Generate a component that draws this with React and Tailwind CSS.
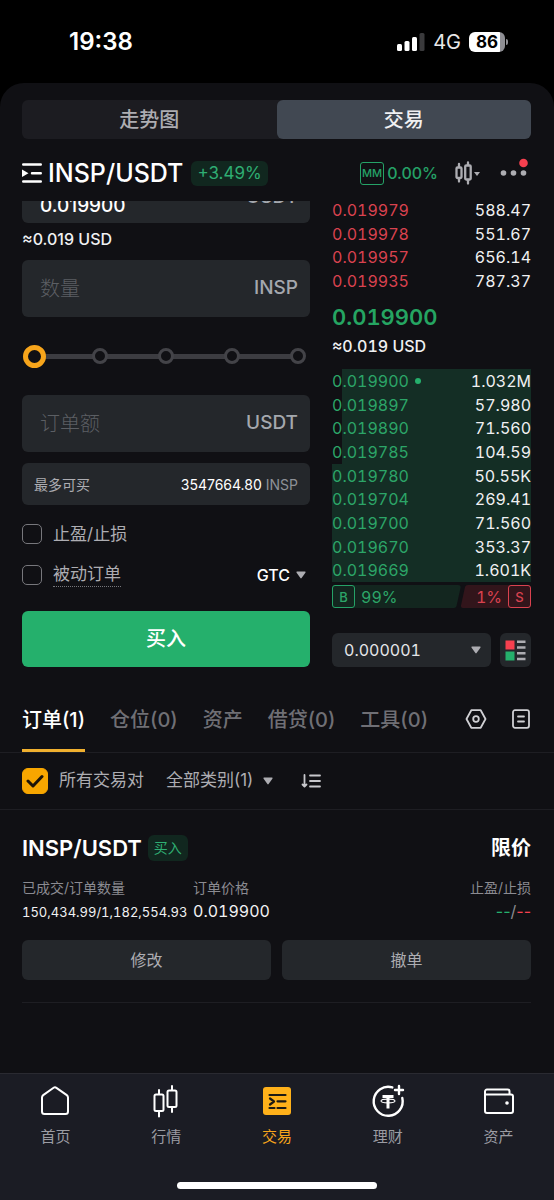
import { useState } from 'react';
import clsx from 'clsx';

const asks = [
    ['0.019979', '588.47'],
    ['0.019978', '551.67'],
    ['0.019957', '656.14'],
    ['0.019935', '787.37'],
];

const bids = [
    { price: '0.019900', size: '1.032M', depth: 95, mine: true },
    { price: '0.019897', size: '57.980', depth: 95 },
    { price: '0.019890', size: '71.560', depth: 95 },
    { price: '0.019785', size: '104.59', depth: 95 },
    { price: '0.019780', size: '50.55K', depth: 100 },
    { price: '0.019704', size: '269.41', depth: 100 },
    { price: '0.019700', size: '71.560', depth: 100 },
    { price: '0.019670', size: '353.37', depth: 100 },
    { price: '0.019669', size: '1.601K', depth: 100 },
];

const Caret = ({ className = 'w-[10px]' }) => (
    <svg viewBox="0 0 10 8" className={clsx('pointer-events-none shrink-0', className)} fill="#adadb2" aria-hidden="true">
        <path d="M1.2.5h7.6c.7 0 1 .7.6 1.2L5.6 7.1a.8.8 0 0 1-1.2 0L.6 1.7C.2 1.2.5.5 1.2.5z" />
    </svg>
);

function StatusBar() {
    return (
        <header className="flex h-[83px] items-center justify-between pr-[46px] pl-[69px]">
            <span className="text-[24px] leading-7 font-semibold text-white">19:38</span>
            <div className="flex items-center gap-2">
                <svg width="28" height="18" viewBox="0 0 28 18" fill="#fff" aria-hidden="true">
                    <rect x="0" y="11" width="5" height="7" rx="1.5" />
                    <rect x="7.5" y="8" width="5" height="10" rx="1.5" />
                    <rect x="15" y="4" width="5" height="14" rx="1.5" />
                    <rect x="22.5" y="0" width="5" height="18" rx="1.5" fill="#3a3a3c" />
                </svg>
                <span className="text-[20px] leading-6 text-[#e8e8e8]">4G</span>
                <div className="flex items-center gap-px">
                    <div className="flex h-5 w-9 items-center justify-center rounded-md bg-linear-to-r from-white from-86% to-[#8e8e93] to-86% text-[17px] leading-5 font-bold text-black">
                        86
                    </div>
                    <div className="h-[6px] w-[2px] rounded-r-full bg-[#8e8e93]" />
                </div>
            </div>
        </header>
    );
}

function PairHeader() {
    return (
        <div className="flex h-[62px] items-center pt-[6px]">
            <button type="button" aria-label="切换交易对" className="mr-[6px]">
                <svg width="20" height="20" viewBox="0 0 20 20" fill="none" stroke="#fff" strokeWidth="2.4" strokeLinecap="round">
                    <path d="M1.2 1.5h17.6M10 10.200h8.800M1.200 18.500h17.600" />
                    <path d="M0 6.500l6.500 3.700-6.500 3.700z" fill="#fff" stroke="none" />
                </svg>
            </button>
            <h1 className="text-[25px] leading-8 font-medium text-white">INSP/USDT</h1>
            <span className="ml-2 rounded-md bg-[#11271f] px-[6px] text-[17px] leading-[25px] text-[#2fae73]">+3.49%</span>
            <div className="ml-auto flex items-center">
                <span className="flex h-[23px] w-6 items-center justify-center rounded-[3px] border border-[#25a267] text-[11px] font-medium text-[#25a267]">
                    MM
                </span>
                <span className="ml-[3px] text-[16px] leading-6 font-medium text-[#25a267]">0.00%</span>
                <button type="button" aria-label="K线" className="ml-[17px]">
                    <svg width="26" height="24" viewBox="0 0 26 24" fill="none" stroke="#adadb2" strokeWidth="2.300" strokeLinecap="round">
                        <rect x="1.500" y="6.500" width="5" height="10.500" rx="1" />
                        <path d="M4 3v3M4 18v2.500" />
                        <rect x="10.200" y="4.500" width="5.500" height="14" rx="1" />
                        <path d="M13 1.500v2.500M13 19v3.500" />
                        <path d="M19 11h6l-3 4z" fill="#adadb2" stroke="none" />
                    </svg>
                </button>
                <button type="button" aria-label="更多" className="ml-[18px]">
                    <svg width="32" height="30" viewBox="0 0 32 30" fill="#adadb2">
                        <circle cx="4.500" cy="15" r="2.800" />
                        <circle cx="14.500" cy="15" r="2.800" />
                        <circle cx="24.500" cy="15" r="2.800" />
                        <circle cx="24.500" cy="5" r="4.300" fill="#f6404f" />
                    </svg>
                </button>
            </div>
        </div>
    );
}

const AmountField = ({ label, unit }) => (
    <label className="flex h-[57px] items-center rounded-md bg-[#24272b] pr-3 pl-[18px]">
        <input
            type="text"
            aria-label={label}
            placeholder={label}
            className="w-full min-w-0 bg-transparent text-[20px] font-light text-white outline-none placeholder:text-[#5c5f64]"
        />
        <span className="text-[19px] font-medium text-[#a4a8ae]">{unit}</span>
    </label>
);

function PercentSlider() {
    const [value, setValue] = useState(0);
    return (
        <div className="relative flex h-6 items-center justify-between">
            <div className="absolute inset-x-3 h-[5px] bg-[#3c3c41]" />
            {[0, 25, 50, 75, 100].map((step) => (
                <span key={step} className="relative flex w-6 justify-center">
                    <span
                        className={clsx(
                            'rounded-full bg-[#101014]',
                            value === step ? 'size-[23px] border-[5px] border-[#f7a51b]' : 'size-4 border-[3px] border-[#434348]'
                        )}
                    />
                </span>
            ))}
            <input
                type="range"
                min="0"
                max="100"
                step="25"
                value={value}
                onChange={(e) => setValue(Number(e.target.value))}
                aria-label="仓位比例"
                className="absolute inset-0 w-full cursor-pointer opacity-0"
            />
        </div>
    );
}

const Option = ({ children }) => (
    <label className="flex items-center gap-[11px] text-[17px] leading-6 text-[#adadb2]">
        <input type="checkbox" className="size-5 appearance-none rounded-[5px] border border-[#77777c] checked:bg-[#f7a600]" />
        {children}
    </label>
);

function OrderForm() {
    return (
        <form className="flex flex-col" onSubmit={(e) => e.preventDefault()}>
            {/* price box, scrolled half under the header */}
            <div className="flex h-[22px] items-end overflow-hidden">
                <label className="flex h-[57px] w-full shrink-0 items-center rounded-md bg-[#24272b] pt-[6px] pr-3 pl-[18px]">
                    <input
                        type="text"
                        aria-label="价格"
                        defaultValue="0.019900"
                        className="w-full min-w-0 bg-transparent pt-[18px] text-[19px] font-medium text-white outline-none"
                    />
                    <span className="text-[19px] font-medium text-[#a4a8ae]">USDT</span>
                </label>
            </div>
            <p className="mt-1 text-[16px] leading-6 font-medium text-[#f0f0f2]">≈0.019 USD</p>
            <div className="mt-[9px]">
                <AmountField label="数量" unit="INSP" />
            </div>
            <div className="my-[27px]">
                <PercentSlider />
            </div>
            <AmountField label="订单额" unit="USDT" />
            <div className="mt-[11px] flex h-[42px] items-center justify-between rounded-md bg-[#24272b] px-3 text-[14px]">
                <span className="text-[#adadb2]">最多可买</span>
                <span className="text-[#8e9197]">
                    <span className="text-white">3547664.80</span> INSP
                </span>
            </div>
            <div className="mt-[17px]">
                <Option>止盈/止损</Option>
            </div>
            <div className="mt-4 flex items-center justify-between">
                <Option>
                    <span className="border-b border-dotted border-[#77777c]">被动订单</span>
                </Option>
                <label className="flex items-center gap-[6px] pr-1">
                    <select aria-label="有效方式" className="field-sizing-content appearance-none text-[16px] leading-6 font-medium text-white outline-none">
                        <option>GTC</option>
                    </select>
                    <Caret />
                </label>
            </div>
            <button type="submit" className="mt-6 h-[56px] rounded-md bg-[#25b06c] text-[20px] font-medium text-white">
                买入
            </button>
        </form>
    );
}

function OrderBook() {
    return (
        <section className="flex flex-col text-[16px] leading-6 tabular-nums">
            <div className="-mt-[3px] grid h-[95px] auto-rows-fr">
                {asks.map(([price, size]) => (
                    <div key={price} className="flex items-center justify-between">
                        <span className="text-[#d9424f]">{price}</span>
                        <span className="text-[#f0f0f2]">{size}</span>
                    </div>
                ))}
            </div>
            <p className="mt-[10px] text-[22px] leading-7 font-semibold text-[#25a562]">0.019900</p>
            <p className="mt-[3px] font-medium text-[#f0f0f2]">≈0.019 USD</p>
            <div className="mt-[11px] grid h-[213px] auto-rows-fr">
                {bids.map((row) => (
                    <div key={row.price} className="relative flex items-center justify-between">
                        <div className="absolute inset-y-0 right-0 bg-[#142e25]" style={{ width: `${row.depth}%` }} />
                        <span className="relative flex items-center gap-[6px] text-[#2ca568]">
                            {row.price}
                            {row.mine && <span className="size-[6px] rounded-full bg-[#25b06c]" />}
                        </span>
                        <span className="relative text-[#f0f0f2]">{row.size}</span>
                    </div>
                ))}
            </div>
            <div className="relative mt-[3px] flex h-[23px] items-center justify-between">
                <svg className="absolute inset-0 h-full w-full" viewBox="0 0 199 23" preserveAspectRatio="none" aria-hidden="true">
                    <path d="M3 0h123c2 0 3 1 2.500 3l-4 18c-.4 1.300-1.200 2-2.500 2H3a3 3 0 0 1-3-3V3a3 3 0 0 1 3-3z" fill="#13261f" />
                    <path d="M136 0h60a3 3 0 0 1 3 3v17a3 3 0 0 1-3 3h-65c-1.500 0-2.300-1-2-2.500l4-18.500c.4-1.300 1.500-2 3-2z" fill="#32151b" />
                </svg>
                <span className="relative flex items-center gap-[6px] text-[#2ca568]">
                    <span className="flex size-[23px] items-center justify-center rounded-[3px] border border-[#25a267] text-[13px] font-medium">B</span>
                    99%
                </span>
                <span className="relative flex items-center gap-[6px] text-[#d9424f]">
                    1%
                    <span className="flex size-[23px] items-center justify-center rounded-[3px] border border-[#d9424f] text-[13px] font-medium">S</span>
                </span>
            </div>
            <div className="mt-[25px] flex h-[34px] gap-[9px]">
                <label className="relative flex flex-1 items-center rounded-md bg-[#24272b]">
                    <select aria-label="价格精度" className="h-full w-full appearance-none pl-3 text-[#e3e5e8] outline-none">
                        <option>0.000001</option>
                    </select>
                    <Caret className="absolute right-[10px] w-[10px]" />
                </label>
                <button type="button" aria-label="盘口显示" className="flex w-[31px] items-center justify-center rounded-md bg-[#24272b]">
                    <svg width="21" height="21" viewBox="0 0 21 21">
                        <path d="M.5.5h9v9h-9z" fill="#f6404f" />
                        <path d="M.5 11.500h9v9h-9z" fill="#25b06c" />
                        <path d="M12 1.800h8.500M12 7.500h8.500M12 13.200h8.500M12 19h8.500" stroke="#adadb2" strokeWidth="2.500" />
                    </svg>
                </button>
            </div>
        </section>
    );
}

function OrderTabs() {
    const tabs = ['订单(1)', '仓位(0)', '资产', '借贷(0)', '工具(0)'];
    return (
        <nav className="flex h-[71px] items-stretch border-b border-[#1e1e23] pr-[23px] pl-[22px]">
            <div className="flex gap-[25px]">
                {tabs.map((tab, i) => (
                    <button
                        key={tab}
                        type="button"
                        className={clsx(
                            'border-b-[3px] pt-2 text-[20px] font-medium whitespace-nowrap',
                            i === 0 ? 'border-[#f0b02f] text-white' : 'border-transparent text-[#6f6f75]'
                        )}
                    >
                        {tab}
                    </button>
                ))}
            </div>
            <div className="ml-auto flex items-center gap-6 pt-[3px]">
                <button type="button" aria-label="设置">
                    <svg width="22" height="20" viewBox="0 0 22 20" fill="none" stroke="#d0d0d4" strokeWidth="1.800" strokeLinejoin="round">
                        <path d="M6.300 1.200h9.400L20.500 10l-4.800 8.800H6.300L1.500 10z" />
                        <circle cx="11" cy="10" r="2.800" />
                    </svg>
                </button>
                <button type="button" aria-label="历史订单">
                    <svg width="20" height="20" viewBox="0 0 20 20" fill="none" stroke="#d0d0d4" strokeWidth="1.800" strokeLinecap="round">
                        <rect x="2" y="1.200" width="16" height="17.600" rx="2" />
                        <path d="M7 7.500h6M7 12.500h6" />
                    </svg>
                </button>
            </div>
        </nav>
    );
}

function FilterBar() {
    return (
        <div className="flex h-[57px] items-center border-b border-[#1e1e23] px-[22px] text-[17px] text-[#adadb2]">
            <label className="relative flex items-center gap-[11px]">
                <input type="checkbox" defaultChecked className="peer size-[26px] appearance-none rounded-md border border-[#77777c] checked:border-[#f7a600] checked:bg-[#f7a600]" />
                <svg className="pointer-events-none absolute left-1 hidden peer-checked:block" width="18" height="14" viewBox="0 0 18 14" fill="none" stroke="#1c1408" strokeWidth="3" strokeLinecap="round" strokeLinejoin="round">
                    <path d="M2 7l5 5 9-9.500" />
                </svg>
                所有交易对
            </label>
            <label className="ml-[22px] flex items-center gap-[10px]">
                <select aria-label="订单类别" className="field-sizing-content appearance-none outline-none">
                    <option>全部类别(1)</option>
                </select>
                <Caret />
            </label>
            <button type="button" aria-label="排序" className="ml-7">
                <svg width="20" height="14" viewBox="0 0 20 14" fill="none" stroke="#c8c8cc" strokeWidth="1.800" strokeLinecap="round" strokeLinejoin="round">
                    <path d="M3.500 1v11M1.500 10.500l2 2 2-2M9 1.500h10M9 7h10M9 12.500h10" />
                </svg>
            </button>
        </div>
    );
}

function OpenOrder() {
    return (
        <article className="mr-[23px] ml-[22px] border-b border-[#1e1e23] pt-[23px] pb-[22px]">
            <div className="flex h-[30px] items-center">
                <h2 className="text-[22px] leading-7 font-semibold text-white">INSP/USDT</h2>
                <span className="ml-[6px] rounded-md bg-[#11271f] px-[6px] text-[14px] leading-[26px] text-[#2fae73]">买入</span>
                <span className="ml-auto text-[20px] font-bold text-white">限价</span>
            </div>
            <dl className="mt-[14px] grid grid-cols-[171px_1fr_auto] text-[14px] leading-[22px] text-[#8b8b91]">
                <div>
                    <dt>已成交/订单数量</dt>
                    <dd className="text-[13px] leading-[26px] whitespace-nowrap text-[#f0f0f2] tabular-nums">150,434.99/1,182,554.93</dd>
                </div>
                <div>
                    <dt>订单价格</dt>
                    <dd className="text-[16px] leading-6 text-[#f0f0f2] tabular-nums">0.019900</dd>
                </div>
                <div className="text-right">
                    <dt>止盈/止损</dt>
                    <dd className="text-[16px] leading-6">
                        <span className="text-[#25b06c]">--</span>/<span className="text-[#f6404f]">--</span>
                    </dd>
                </div>
            </dl>
            <div className="mt-[15px] grid grid-cols-2 gap-[11px] text-[16px] text-[#adadb2]">
                <button type="button" className="h-10 rounded-md bg-[#24272b]">修改</button>
                <button type="button" className="h-10 rounded-md bg-[#24272b]">撤单</button>
            </div>
        </article>
    );
}

const navItems = [
    {
        label: '首页',
        icon: <path d="M3 12.500c0-1 .4-1.800 1.200-2.400l10.400-7.300a2.500 2.500 0 0 1 2.800 0l10.400 7.300c.8.600 1.200 1.400 1.200 2.400v14a2.500 2.500 0 0 1-2.500 2.500h-21A2.500 2.500 0 0 1 3 26.500z" />,
    },
    {
        label: '行情',
        icon: (
            <>
                <rect x="4.500" y="9.500" width="9" height="16.500" rx="1.500" />
                <rect x="17.500" y="5.500" width="9" height="16.500" rx="1.500" />
                <path d="M9 5v4M9 26.500v5M22 1v4M22 22.500v4.500" />
            </>
        ),
    },
    {
        label: '交易',
        active: true,
        icon: (
            <>
                <rect x="2" y="2" width="28" height="28" rx="3" fill="#ffb11a" stroke="none" />
                <path d="M8.500 10h16M16.500 16.300h8M16.500 23h8M8.500 23h5M9 13.500l4 3-4 3" stroke="#1d1a14" strokeWidth="2.200" />
            </>
        ),
    },
    {
        label: '理财',
        icon: (
            <>
                <path d="M20.300 2.400A14.500 14.500 0 1 0 30.300 13" strokeWidth="2.400" />
                <path d="M27 1v8M23 5h8" strokeWidth="2.400" />
                <path d="M10.500 11.500h11M16 11.500v12" strokeWidth="3" strokeLinecap="butt" />
                <ellipse cx="16" cy="16" rx="7" ry="1.900" strokeWidth="1.100" />
            </>
        ),
    },
    {
        label: '资产',
        icon: (
            <>
                <path d="M2 9.500V6.500a2 2 0 0 1 2-2h20.500a2 2 0 0 1 2 2v3M2 9.500h26a2 2 0 0 1 2 2V26a2 2 0 0 1-2 2H4a2 2 0 0 1-2-2z" />
                <circle cx="24" cy="18" r="1.800" fill="#fff" stroke="none" />
            </>
        ),
    },
];

function BottomNav() {
    return (
        <footer className="mt-auto border-t border-[#2a2a31] bg-[#1b1c24]">
            <nav className="grid grid-cols-5">
                {navItems.map((item) => (
                    <a
                        key={item.label}
                        href="#"
                        className={clsx(
                            'flex flex-col items-center gap-2 pt-[11px] text-[15px] leading-6',
                            item.active ? 'text-[#f7a51b]' : 'text-[#9b9ca3]'
                        )}
                    >
                        <svg width="32" height="32" viewBox="0 0 32 32" fill="none" stroke="#fff" strokeWidth="2" strokeLinecap="round" strokeLinejoin="round" className="overflow-visible" aria-hidden="true">
                            {item.icon}
                        </svg>
                        {item.label}
                    </a>
                ))}
            </nav>
            <div className="mx-auto mt-[33px] mb-[11px] h-[7px] w-[36%] rounded-full bg-white" />
        </footer>
    );
}

export default function App() {
    return (
        <div className="flex min-h-screen flex-col bg-black font-['Inter','Noto_Sans_CJK_SC',sans-serif]">
            <StatusBar />
            <main className="flex flex-1 flex-col rounded-t-[24px] bg-[#101014]">
                <div className="pt-[17px] pr-[23px] pl-[22px]">
                    <div className="grid grid-cols-2 rounded-md bg-[#1c1c21] text-[20px] font-medium">
                        <button type="button" className="h-[39px] rounded-md text-[#adadb2]">走势图</button>
                        <button type="button" className="h-[39px] rounded-md bg-[#414852] text-[#f0f0f2]">交易</button>
                    </div>
                    <PairHeader />
                    <div className="grid grid-cols-[288fr_199fr] gap-[22px]">
                        <OrderForm />
                        <OrderBook />
                    </div>
                </div>
                <div className="mt-[15px]">
                    <OrderTabs />
                    <FilterBar />
                    <OpenOrder />
                </div>
                <BottomNav />
            </main>
        </div>
    );
}
